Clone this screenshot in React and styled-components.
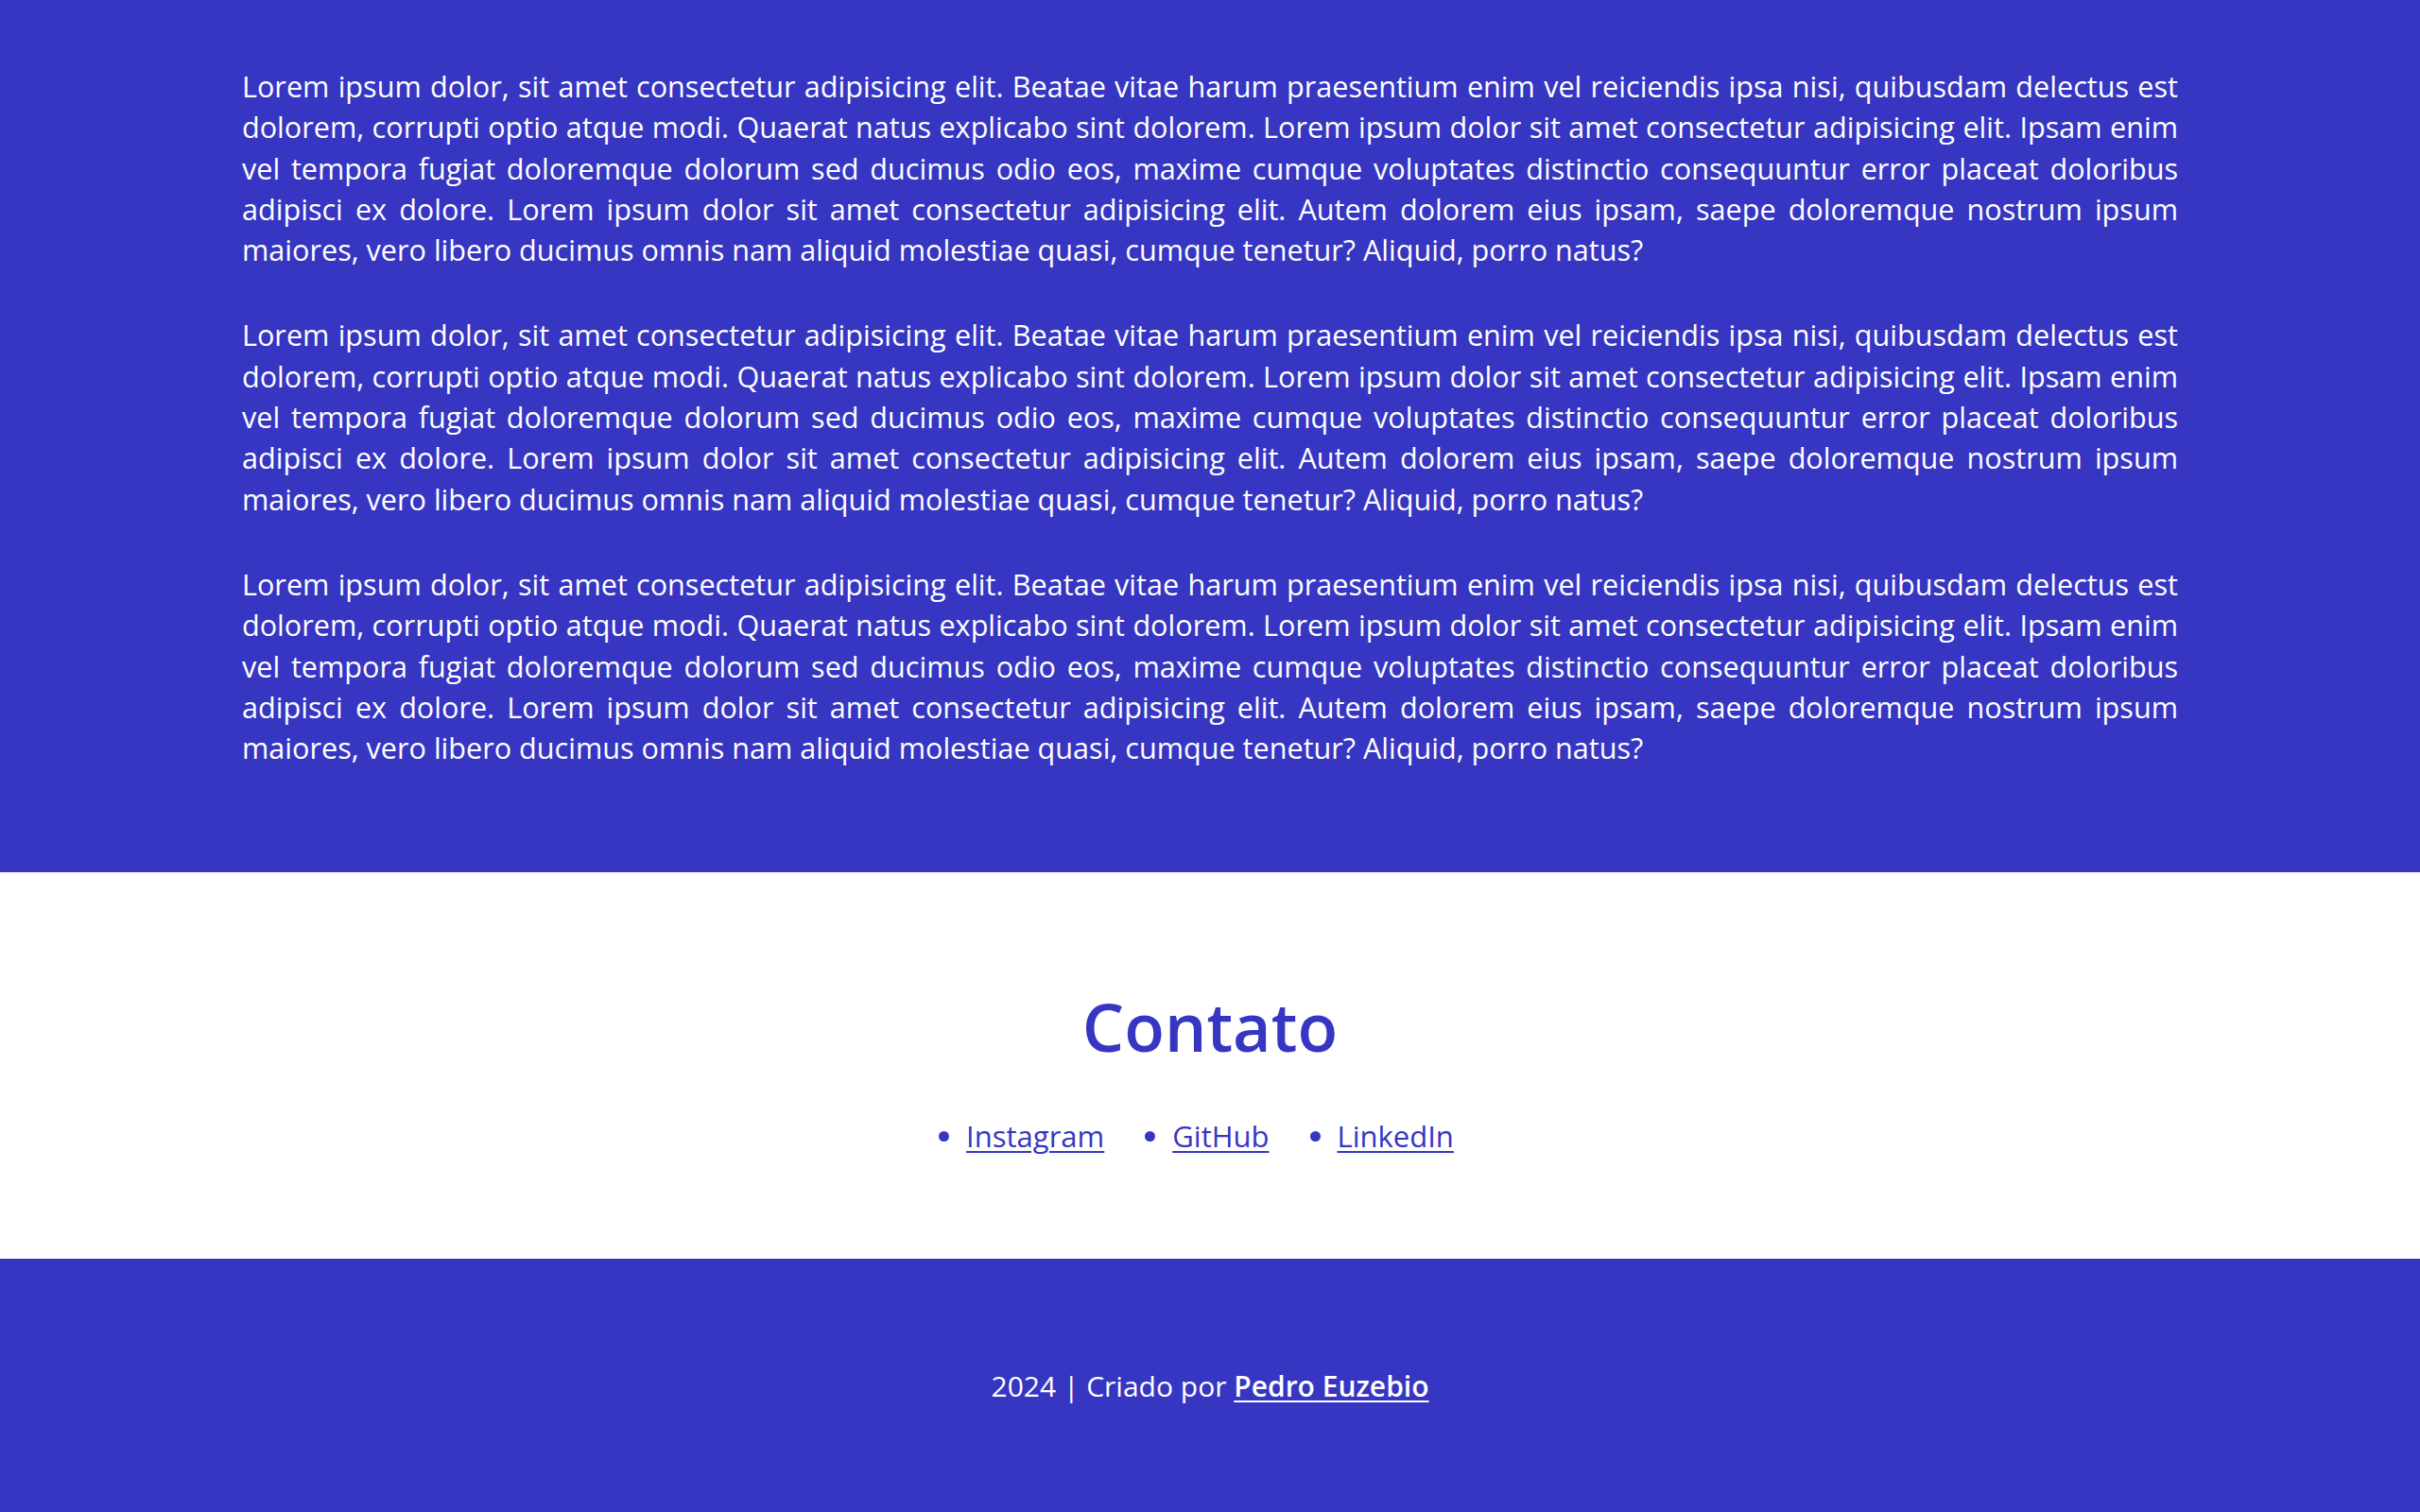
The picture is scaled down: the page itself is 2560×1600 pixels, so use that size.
import { useLayoutEffect } from 'react'
import { styled, createGlobalStyle } from 'styled-components'

const GlobalStyle = createGlobalStyle`
    * { box-sizing: border-box; }
    body {
        margin: 0;
        font-family: "Segoe UI", "Open Sans", "Noto Sans", sans-serif;
        background: #fff;
    }
`;

const BLUE = '#3636c3';

const Section = styled.section`
    background-color: ${props => props.$blue ? BLUE : '#fff'};
    color: ${props => props.$blue ? '#fff' : BLUE};
    padding: ${props => props.$pad || '0'};
`;

const Title = styled.h2`
    margin: 0 0 ${props => props.$gap || '44px'};
    text-align: center;
    font-size: 70px;
    font-weight: 600;
    line-height: 100px;
`;

const Text = styled.p`
    margin: 0 0 47px;
    font-size: 30.6px;
    line-height: 43.3px;
    text-align: justify;

    &:last-child{
        margin-bottom: 0;
    }
`;

const Inner = styled.div`
    width: 80%;
    margin: 0 auto;
`;

const Links = styled.ul`
    list-style: disc outside;
    margin: 0;
    padding: 0;
    display: flex;
    justify-content: center;
    gap: 72px;
`;

const LinkItem = styled.li`
    display: list-item;
    font-size: 31px;
    line-height: 44px;

    &::marker{
        color: ${BLUE};
    }

    a{
        color: ${BLUE};
        text-decoration: underline;
        text-underline-offset: 4px;
        text-decoration-thickness: 2px;
    }
`;

const Footer = styled.footer`
    background-color: ${BLUE};
    color: #fff;
    height: 268px;
    display: flex;
    align-items: center;
    justify-content: center;
    font-size: 30px;

    a{
        color: #fff;
        font-weight: 600;
        text-decoration: underline;
        text-underline-offset: 4px;
        text-decoration-thickness: 2px;
    }
`;

const lorem = "Lorem ipsum dolor, sit amet consectetur adipisicing elit. Beatae vitae harum praesentium enim vel reiciendis ipsa nisi, quibusdam delectus est dolorem, corrupti optio atque modi. Quaerat natus explicabo sint dolorem. Lorem ipsum dolor sit amet consectetur adipisicing elit. Ipsam enim vel tempora fugiat doloremque dolorum sed ducimus odio eos, maxime cumque voluptates distinctio consequuntur error placeat doloribus adipisci ex dolore. Lorem ipsum dolor sit amet consectetur adipisicing elit. Autem dolorem eius ipsam, saepe doloremque nostrum ipsum maiores, vero libero ducimus omnis nam aliquid molestiae quasi, cumque tenetur? Aliquid, porro natus?";

const App = () => {

    useLayoutEffect(() => {
        window.scrollTo(0, document.documentElement.scrollHeight)
    }, [])

    return (
        <>
            <GlobalStyle />
            <Section $blue $pad="60px 0 110px">
                <Title $gap="56px">Sobre</Title>
                <Inner>
                    <Text>{lorem}</Text>
                    <Text>{lorem}</Text>
                    <Text>{lorem}</Text>
                </Inner>
            </Section>

            <Section $pad="113px 0 108px">
                <Title>Contato</Title>
                <Links>
                    <LinkItem><a href="#">Instagram</a></LinkItem>
                    <LinkItem><a href="#">GitHub</a></LinkItem>
                    <LinkItem><a href="#">LinkedIn</a></LinkItem>
                </Links>
            </Section>

            <Footer>
                <span>2024 | Criado por <a href="#">Pedro Euzebio</a></span>
            </Footer>
        </>
    )
}

export default App
